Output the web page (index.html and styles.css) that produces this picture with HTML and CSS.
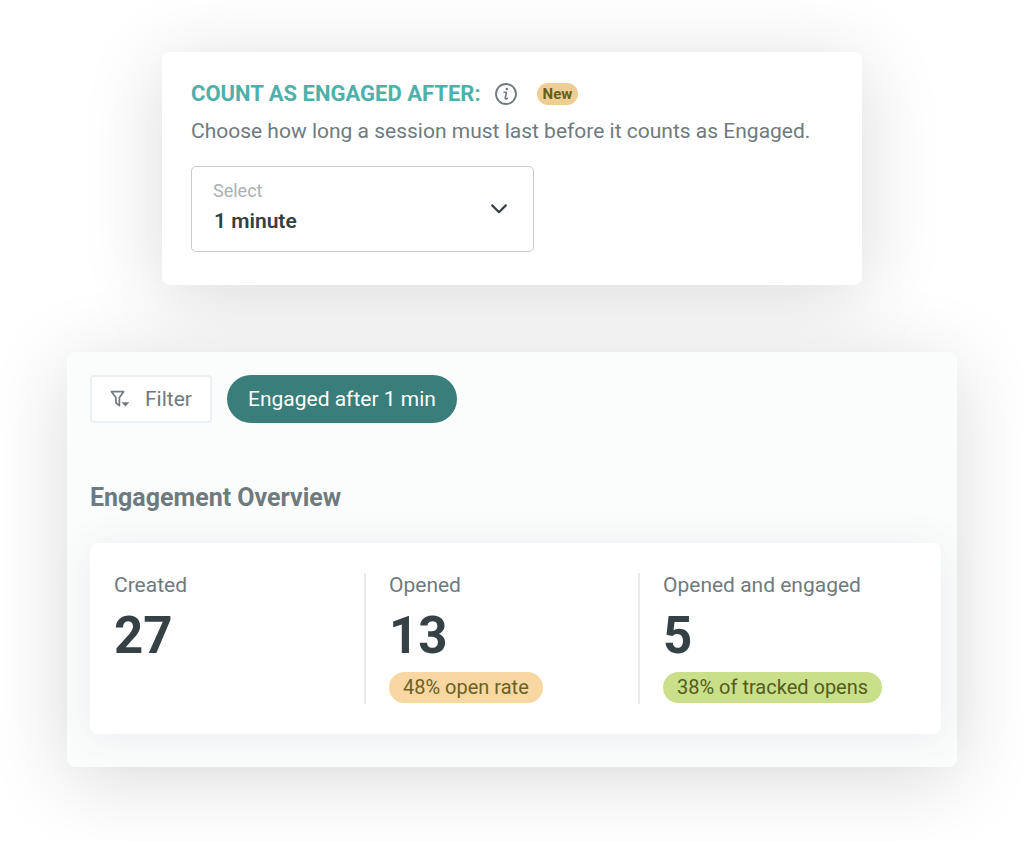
FILE: index.html
```html
<!DOCTYPE html>
<html lang="en">
<head>
    <meta charset="UTF-8">
    <meta name="viewport" content="width=device-width, initial-scale=1">
    <title>Engagement</title>
    <link rel="stylesheet" href="styles.css">
</head>
<body>
    <main class="page">
        <section class="card settings">
            <div class="settings-head">
                <h2 class="settings-title">COUNT AS ENGAGED AFTER:</h2>
                <svg class="info-icon" viewBox="0 0 22 22" fill="none" stroke="currentColor" stroke-linecap="round" stroke-linejoin="round" aria-hidden="true">
                    <circle cx="11" cy="11" r="10" stroke-width="1.8"/>
                    <path d="M9 9.200h2.500l-1.300 5.900c-.1.900.9 1 2.300.2" stroke-width="1.600"/>
                    <circle cx="11.900" cy="6" r="1.300" fill="currentColor" stroke="none"/>
                </svg>
                <span class="badge">New</span>
            </div>
            <p class="settings-text">Choose how long a session must last before it counts as Engaged.</p>
            <div class="field">
                <label class="field-label" for="duration">Select</label>
                <select class="field-select" id="duration">
                    <option>1 minute</option>
                </select>
                <svg class="field-arrow" viewBox="0 0 18 12" fill="none" stroke="currentColor" stroke-width="2.2" stroke-linecap="round" stroke-linejoin="round" aria-hidden="true">
                    <path d="M2.200 2.400 9 9.200l6.800-6.800"/>
                </svg>
            </div>
        </section>

        <section class="card overview">
            <div class="toolbar">
                <button class="filter" type="button">
                    <svg class="filter-icon" viewBox="0 0 20 18" fill="none" aria-hidden="true">
                        <path d="M1.500 1.700H13.600L9.400 7.500V15.700L5.900 12.800V7.500Z" stroke="currentColor" stroke-width="1.700" stroke-linejoin="round"/>
                        <path d="M11.500 12.300H19.400L15.400 16.400Z" fill="currentColor"/>
                    </svg>
                    Filter
                </button>
                <button class="chip" type="button">Engaged after 1 min</button>
            </div>
            <h2 class="overview-title">Engagement Overview</h2>
            <div class="stats">
                <div class="stat">
                    <p class="stat-name">Created</p>
                    <p class="stat-value">27</p>
                </div>
                <div class="stat">
                    <p class="stat-name">Opened</p>
                    <p class="stat-value">13</p>
                    <span class="rate">48% open rate</span>
                </div>
                <div class="stat">
                    <p class="stat-name">Opened and engaged</p>
                    <p class="stat-value">5</p>
                    <span class="rate rate-green">38% of tracked opens</span>
                </div>
            </div>
        </section>
    </main>
</body>
</html>
```
FILE: styles.css
```css
* { margin: 0; padding: 0; box-sizing: border-box; }
body {
    background: #fff;
    font-family: Roboto, "Liberation Sans", sans-serif;
    font-size: 21px;
    line-height: 28px;
    color: #6f7a80;
}
button, select {
    font: inherit;
    cursor: pointer;
}
.page {
    display: flex;
    flex-direction: column;
    align-items: center;
    gap: 67px;
    padding: 52px 67px 74px;
    overflow: hidden;
}
.card {
    width: 100%;
    border-radius: 8px;
    box-shadow: 0 12px 80px rgba(0, 0, 0, 0.15);
}

/* settings */
.settings {
    max-width: 700px;
    padding: 28px 28px 33px 29px;
    background: #fff;
}
.settings-head {
    display: flex;
    align-items: center;
    gap: 14px;
}
.settings-title {
    font-size: 22px;
    font-weight: 700;
    color: #4fb0ab;
}
.info-icon {
    width: 22px;
    height: 22px;
}
.badge {
    margin-left: 6px;
    padding: 0 6px;
    border-radius: 12px;
    background: #f0cd92;
    font-size: 15px;
    font-weight: 700;
    line-height: 22px;
    color: #64601c;
}
.settings-text {
    margin: 9px 0 21px;
}
.field {
    display: grid;
    align-items: center;
    max-width: 343px;
    height: 86px;
}
.field-label, .field-select, .field-arrow {
    grid-area: 1 / 1;
}
.field-label {
    align-self: start;
    padding: 12px 22px;
    font-size: 18px;
    line-height: 26px;
    color: #a9b0b3;
    pointer-events: none;
}
.field-select {
    width: 100%;
    height: 100%;
    padding: 24px 22px 0;
    border: 1px solid #c6cbcc;
    border-radius: 5px;
    background: transparent;
    font-size: 21px;
    font-weight: 600;
    color: #344045;
    appearance: none;
}
.field-arrow {
    justify-self: end;
    width: 18px;
    height: 12px;
    margin-right: 26px;
    color: #344045;
    pointer-events: none;
}

/* overview */
.overview {
    max-width: 890px;
    padding: 23px 16px 33px 23px;
    background: #fbfdfc;
}
.toolbar {
    display: flex;
    flex-wrap: wrap;
    gap: 15px;
}
.filter {
    display: flex;
    align-items: center;
    gap: 15px;
    height: 48px;
    padding: 0 18px;
    border: 2px solid #eaf0f4;
    border-radius: 4px;
    background: #fff;
    color: #6f7a80;
}
.filter-icon {
    width: 20px;
    height: 18px;
}
.chip {
    height: 48px;
    padding: 0 21px;
    border: none;
    border-radius: 24px;
    background: #397e7b;
    color: #fff;
}
.overview-title {
    margin: 60px 0 31px;
    font-size: 25px;
    font-weight: 700;
    line-height: 29px;
}
.stats {
    display: grid;
    grid-template-columns: repeat(3, 1fr);
    padding: 30px 29px 30px 0;
    border-radius: 8px;
    background: #fff;
    box-shadow: 0 4px 40px rgba(60, 70, 110, 0.09);
}
.stat {
    min-height: 131px;
    padding-left: 24px;
}
.stat + .stat {
    padding-left: 23px;
    border-left: 2px solid #e7e9ea;
}
.stat-name {
    line-height: 24px;
}
.stat-value {
    padding: 12px 0 10px;
    font-size: 51px;
    font-weight: 700;
    line-height: 53px;
    color: #364146;
}
.rate {
    display: inline-block;
    padding: 0 14px;
    border-radius: 16px;
    background: #f9d7a2;
    font-size: 20px;
    line-height: 31px;
    color: #6b611f;
}
.rate-green {
    background: #c9df8a;
    color: #545c1c;
}
```
